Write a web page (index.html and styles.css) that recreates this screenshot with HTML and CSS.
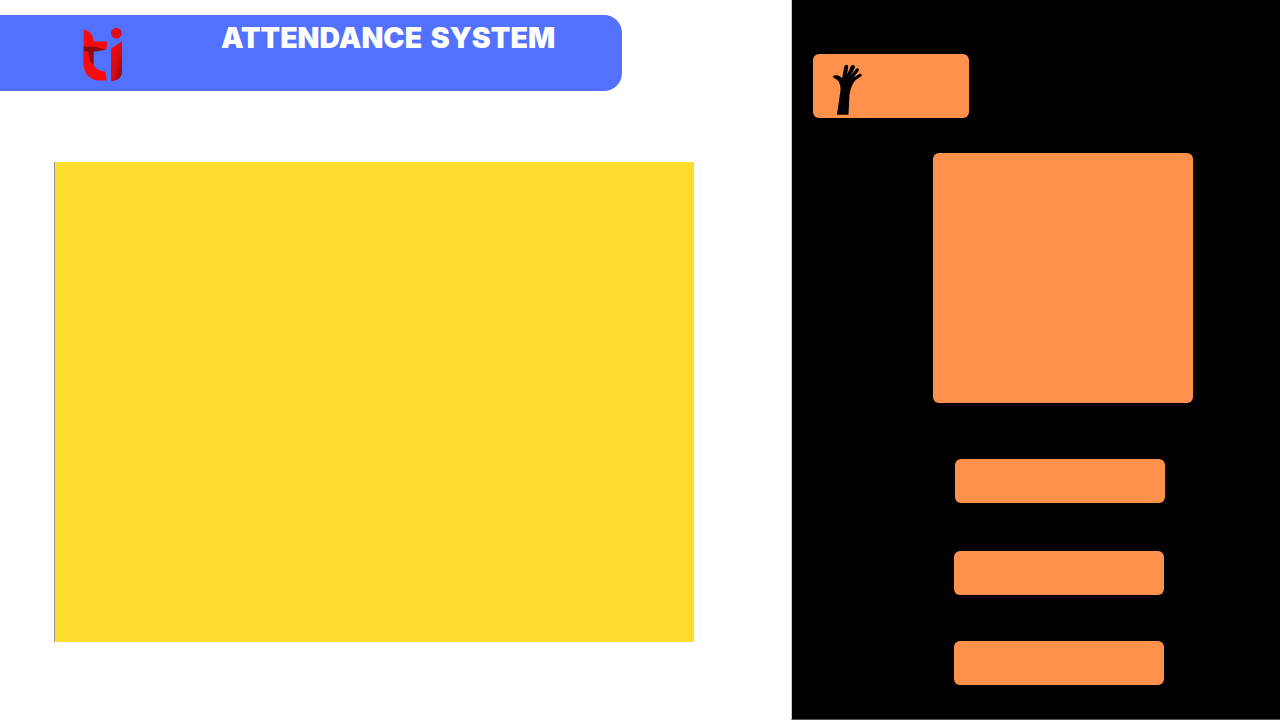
FILE: index.html
```html
<!DOCTYPE html>
<html lang="en">

<head>
    <meta charset="UTF-8">
    <meta name="viewport" content="width=device-width, initial-scale=1.0">
    <title>Attendance System</title>
    <link rel="stylesheet" href="styles.css">
</head>

<body>
    <div class="main">
        <header class="header">
            <svg class="logo" viewBox="68 52 120 164" width="40" height="55" aria-label="ti logo">
                <defs>
                    <linearGradient id="logoRed" x1="0" y1="0" x2="1" y2="1">
                        <stop offset="0" stop-color="#ff0a0a" />
                        <stop offset="0.55" stop-color="#d80a10" />
                        <stop offset="1" stop-color="#7c0a10" />
                    </linearGradient>
                </defs>
                <path fill="#f90a0c" d="M70 59 C88 62 99 76 100 95 L141 95 L138 120 L70 120 Z" />
                <path fill="#8d0a10" d="M70 110 L100 110 L138 120 L100 126 L100 165 L70 165 Z" />
                <path fill="#f90a0c" d="M70 125 L84 125 C86 150 92 160 100 165 C104 176 118 184 136 186 L139 212 L112 212 C88 210 70 190 70 165 Z" />
                <circle cx="168" cy="70" r="16" fill="#e10a14" />
                <path fill="url(#logoRed)" d="M152 116 L185 94 L185 188 C184 202 172 213 152 214 Z" />
            </svg>
            <h1 class="title">ATTENDANCE SYSTEM</h1>
        </header>
        <div class="camera"></div>
    </div>

    <aside class="side">
        <div class="hand-card">
            <svg class="hand" viewBox="75 50 100 162" width="33" height="54" aria-label="raised hand">
                <path fill="#000" d="M96 209 L107 134 C107 122 105 112 99 106 C94 100 87 98 83 94 C88 88 98 89 104 92 L112 98 L118 64 C120 55 131 55 130 64 L127 86 L138 62 C143 55 153 59 150 67 L138 90 L154 70 C160 65 166 71 161 77 L146 96 L165 85 C172 83 173 91 168 94 C157 100 149 106 145 114 C139 126 136 134 134 150 L131 209 Z" />
            </svg>
        </div>
        <div class="photo"></div>
        <div class="btn btn-first"></div>
        <div class="btn btn-second"></div>
        <div class="btn btn-third"></div>
    </aside>
</body>

</html>
```

FILE: styles.css
```css
body {
    margin: 0;
    height: 720px;
    display: flex;
    overflow: hidden;
    background-color: #fff;
    font-family: 'Inter', 'Liberation Sans', sans-serif;
}

.main {
    width: 791px;
    padding-top: 15px;
    box-sizing: border-box;
}

.header {
    width: 622px;
    height: 76px;
    padding-left: 83px;
    box-sizing: border-box;
    display: flex;
    align-items: flex-start;
    background-color: #5271ff;
    border-radius: 0 18px 18px 0;
}

.logo {
    margin-top: 12px;
    flex-shrink: 0;
}

.title {
    margin: 7px 0 0 98px;
    color: #fff;
    font-size: 28.5px;
    line-height: 32px;
    font-weight: 900;
    letter-spacing: 0;
    word-spacing: 3px;
    white-space: nowrap;
}

.camera {
    width: 640px;
    height: 480px;
    margin: 71px 0 0 54px;
    box-sizing: border-box;
    background-color: #ffdd2c;
    border-left: 1px solid #8f96a3;
}

.side {
    width: 489px;
    height: 720px;
    padding-top: 54px;
    box-sizing: border-box;
    display: flex;
    flex-direction: column;
    align-items: flex-start;
    background-color: #000;
    border-left: 1px solid #c8c8c8;
    border-bottom: 1px solid #555;
}

.hand-card,
.photo,
.btn {
    background-color: #ff914d;
    border-radius: 6px;
}

.hand-card {
    width: 156px;
    height: 64px;
    margin-left: 21px;
    padding: 8px 0 0 17px;
    box-sizing: border-box;
}

.hand {
    display: block;
}

.photo {
    width: 260px;
    height: 250px;
    margin: 35px 0 0 141px;
}

.btn {
    width: 210px;
    height: 44px;
}

.btn-first {
    margin: 56px 0 0 163px;
}

.btn-second {
    margin: 48px 0 0 162px;
}

.btn-third {
    margin: 46px 0 0 162px;
}
```
